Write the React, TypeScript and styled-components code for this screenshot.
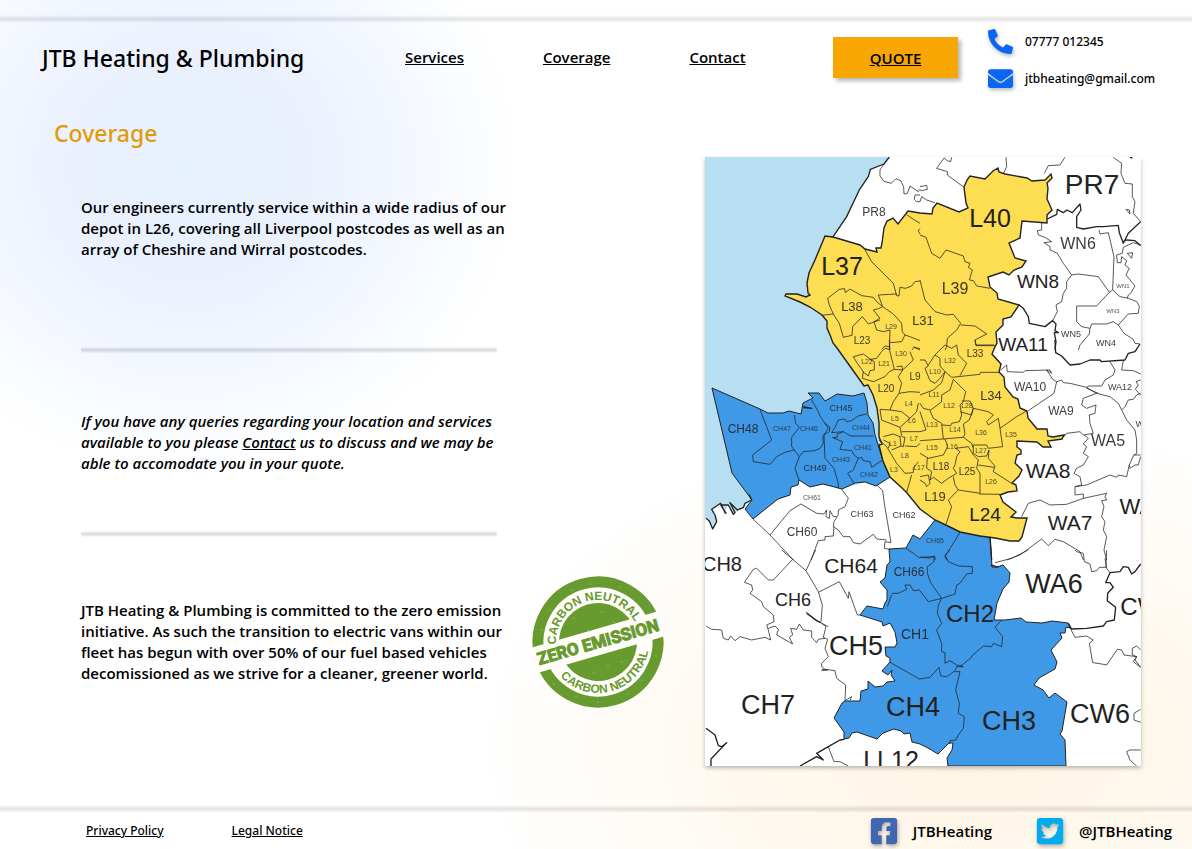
import React from "react";
import styled, { createGlobalStyle } from "styled-components";
import {
  FaEnvelope,
  FaFacebookSquare,
  FaPhoneAlt,
  FaTwitterSquare,
} from "react-icons/fa";

const MEDIUM = `"Noto Sans", "Open Sans", sans-serif`;

const GlobalStyle = createGlobalStyle`
  * { box-sizing: border-box; }
  body {
    margin: 0;
    font-family: "Open Sans", "Noto Sans", sans-serif;
    font-weight: 600;
    color: #000;
    background: #fff;
  }
  a { color: inherit; }
`;

const Page = styled.div`
  min-height: 100vh;
  display: flex;
  flex-direction: column;
  padding-top: 15px;
  background:
    radial-gradient(ellipse 330px 310px at 190px 165px, #e6f1fe 0%, #eaf1fd 35%, #f2f6ff 62%, #fafcff 85%, rgba(255, 255, 255, 0) 100%),
    radial-gradient(ellipse 500px 330px at 82% 88%, #fff4e4 0%, #fef8ed 40%, #fffcf8 75%, rgba(255, 255, 255, 0) 100%),
    #fff;
`;

const Rule = styled.div`
  flex: none;
  height: 8px;
  background: linear-gradient(rgba(0, 0, 0, 0), rgba(0, 0, 0, 0.11) 50%, rgba(0, 0, 0, 0));
`;

const Header = styled.header`
  display: grid;
  grid-template-columns: 363fr 428fr 155fr 204fr;
  align-items: center;
  padding-left: 42px;
  height: 74px;
`;

const Brand = styled.div`
  font-family: ${MEDIUM};
  font-size: 23px;
  line-height: 32px;
  font-weight: 500;
  white-space: nowrap;
  padding-bottom: 5px;
`;

const Nav = styled.nav`
  display: flex;
  gap: 79px;
  font-size: 15px;
  line-height: 20px;
  padding-bottom: 6px;
`;

const QuoteButton = styled.button`
  justify-self: start;
  width: 125px;
  height: 41px;
  margin-bottom: 5px;
  border: 0;
  background: #f7a604;
  box-shadow: 3px 3px 4px rgba(0, 0, 0, 0.28);
  font: inherit;
  font-size: 15px;
  text-decoration: underline;
  cursor: pointer;
`;

const ContactList = styled.address`
  display: grid;
  gap: 12px;
  font-style: normal;
  font-family: ${MEDIUM};
  font-size: 12px;
  font-weight: 500;
`;

const ContactLine = styled.a`
  display: flex;
  align-items: center;
  gap: 12px;
  height: 25px;
  text-decoration: none;
  svg {
    color: #0a66f5;
    filter: drop-shadow(1px 2px 2px rgba(0, 0, 0, 0.3));
  }
`;

const Main = styled.main`
  flex: 1;
  display: grid;
  grid-template-columns: minmax(0, 1fr) minmax(0, 436px);
  column-gap: 40px;
  padding: 20px 51px 38px 54px;
`;

const Heading = styled.h1`
  margin: 0;
  font-family: ${MEDIUM};
  font-size: 23px;
  line-height: 32px;
  font-weight: 500;
  color: #e29b08;
`;

const Story = styled.div`
  padding: 48px 0 0 27px;
`;

const Copy = styled.p<{ $italic?: boolean }>`
  margin: 0;
  max-width: 432px;
  font-size: 15px;
  line-height: 21px;
  font-style: ${(p) => (p.$italic ? "italic" : "normal")};
`;

const Divider = styled.div<{ $before: number; $after: number }>`
  max-width: 416px;
  height: 6px;
  border-radius: 3px;
  margin: ${(p) => p.$before}px 0 ${(p) => p.$after}px;
  background: linear-gradient(rgba(0, 0, 0, 0.02), rgba(0, 0, 0, 0.15) 50%, rgba(0, 0, 0, 0.02));
`;

const Pledge = styled.div`
  display: grid;
  grid-template-columns: minmax(0, 432px) 132px;
  gap: 19px;
  align-items: center;
`;

const MapFrame = styled.figure`
  margin: 40px 0 0;
  align-self: start;
  background: #fff;
  box-shadow: 0 2px 4px rgba(0, 0, 0, 0.28);
  svg { display: block; width: 100%; height: auto; }
`;

const Footer = styled.footer`
  display: flex;
  justify-content: space-between;
  align-items: center;
  height: 36px;
  padding: 0 20px 0 86px;
`;

const Legal = styled.nav`
  display: flex;
  gap: 68px;
  font-family: ${MEDIUM};
  font-size: 12px;
  line-height: 18px;
  font-weight: 500;
`;

const Socials = styled.div`
  display: flex;
  gap: 43px;
`;

const Social = styled.a<{ $tint: string }>`
  display: flex;
  align-items: center;
  gap: 14px;
  font-size: 15px;
  line-height: 20px;
  text-decoration: none;
  svg {
    color: ${(p) => p.$tint};
    filter: drop-shadow(1px 2px 2px rgba(0, 0, 0, 0.3));
  }
`;

/* ---- Postcode map ---- */

const LAND =
  "889,157 884,164 870,169 868,177 859,190 847,217 833,237 880,300 900,400 890,477 876,486 865,482 842,489 823,484 810,487 799,480 791,487 752,500 745,503 743,508 733,514 728,505 725,513 722,503 712,509 717,522 713,529 709,521 705,518 705,766 1141,766 1141,157";

const LIVERPOOL =
  "825,236 815,260 809,273 807,283 808,293 810,295 806,297 797,294 786,294 785,296 800,302 810,307 822,315 827,321 827,328 830,335 833,343 837,348 847,362 862,383 864,386 868,385 873,395 877,408 879,423 879,437 882,444 879,445 883,461 890,477 902,488 907,493 920,509 935,520 950,527 960,532 980,536 995,538 1010,541 1019,541 1022,537 1027,518 1017,518 1011,517 1016,512 1003,502 1000,495 1008,492 1017,491 1016,485 1012,483 1019,476 1022,470 1017,465 1015,463 1017,455 1021,454 1021,450 1017,447 1017,441 1037,442 1043,447 1051,447 1048,441 1062,439 1064,435 1053,437 1048,436 1047,429 1037,429 1028,418 1027,411 1020,408 1018,399 1013,397 1005,387 1004,377 999,372 1001,364 992,354 994,349 997,343 996,332 1003,325 1003,319 1011,317 1019,305 998,299 997,293 990,287 988,277 1003,272 1009,275 1014,270 1022,267 1026,261 1015,258 1009,243 1020,238 1022,221 1047,223 1047,215 1052,210 1047,199 1048,188 1047,183 1052,178 1051,174 1045,180 1032,181 1027,178 1005,174 999,172 998,168 993,171 985,179 970,176 967,180 964,187 966,203 968,208 959,212 937,203 933,208 932,214 920,213 908,211 898,224 893,218 887,221 884,228 882,243 881,248 876,248 877,252 865,249 860,245 833,237";

const WIRRAL =
  "712,388 760,409 768,413 783,413 789,411 801,414 803,403 813,398 808,393 819,393 825,401 832,397 837,394 853,396 864,393 867,403 868,415 873,423 875,435 883,461 890,477 876,486 865,482 855,483 842,489 823,484 810,487 799,480 798,485 791,487 790,495 778,499 753,519 745,509 752,500 732,473";

const CHESTER =
  "935,520 920,539 913,535 906,548 889,549 890,562 887,565 885,578 880,582 887,590 887,600 885,603 883,609 867,606 860,615 882,622 883,626 890,623 895,632 897,643 895,647 885,647 886,656 890,658 890,662 882,671 888,675 892,670 891,675 895,681 887,682 883,686 875,687 868,681 868,689 861,691 860,701 845,701 842,703 834,718 844,732 844,739 849,738 852,733 857,732 877,739 883,733 894,729 901,731 904,734 910,733 912,742 920,744 928,748 938,754 949,743 953,743 952,750 947,758 948,766 1066,766 1065,740 1060,734 1062,731 1067,702 1055,693 1049,698 1043,690 1034,685 1039,678 1055,669 1057,662 1051,650 1062,638 1060,633 1065,633 1066,627 1070,628 1068,623 1052,621 1042,623 1026,622 1021,618 1005,620 994,620 997,603 1003,589 1009,582 1010,573 1003,565 997,567 992,567 991,550 990,538";

type Sheet = { x: number; y: number; thin: string; bold: string };

/* District borders, drawn per map sheet at three units to the pixel. */
const SHEETS: Sheet[] = [
  {
    x: 700,
    y: 150,
    thin:
      "M552,42 540,60 540,78 552,94 574,100 588,86 602,92 611,110 612,132 622,130 630,108 655,125 660,118 M660,135 645,135 643,148 650,155 660,155 M620,194 640,208 660,220 M660,236 655,242 660,252 M495,300 515,335 580,400 590,437 597,438 600,412 617,415 635,408 645,395 660,393 M590,432 535,435 548,470 535,476 520,480 540,505 522,515 530,540 550,545 570,540 570,555 568,575 570,600 M365,496 400,492 388,465 383,445 418,418 434,416 436,428 450,417 485,437 520,442 530,455 548,470 M400,492 418,520 430,562 456,556 458,530 487,500 505,522 540,510 M548,470 580,492 605,520 607,545 615,555 605,575 572,578 M615,555 635,562 660,572 M545,598 555,588 568,590 M636,600 642,592 660,596",
    bold: "M568,21 552,42 511,58 505,80 478,120 440,200 398,262",
  },
  {
    x: 920,
    y: 150,
    thin:
      "M95,22 92,35 82,32 72,24 50,55 82,65 82,75 132,112 M0,110 20,106 22,118 5,122 0,120 M0,155 5,140 20,150 45,158 M258,22 260,50 250,72 M435,22 420,45 385,47 373,70 M580,22 605,40 603,70 615,100 637,102 637,140 645,155 640,190 662,215 M0,255 18,262 35,310 60,325 78,300 130,318 135,335 150,340 145,352 157,360 148,390 160,392 170,408 210,415 M0,390 15,450 45,485 80,495 100,493 122,520 110,540 82,565 80,590 75,600 M122,525 165,528 200,552 165,570 168,587 225,587 M365,218 365,240 352,242 355,255 375,262 395,275 372,278 390,290 390,300 412,310 430,340 455,375 440,395 440,415 430,430 425,455 408,465 412,485 398,512 M455,375 475,372 535,380 568,427 530,468 470,468 470,515 485,530 510,535 508,552 480,585 475,600 M537,240 540,252 565,248 582,320 578,420 600,440 625,445 650,455 658,468 655,490 625,492 595,525 580,515 560,522 515,522 510,535 M568,427 578,420 M595,525 612,550 640,568 645,580 660,582 M590,315 607,310 610,292 640,278 662,285 M590,315 592,338 603,338 605,320 620,332 615,345 628,355 618,375 645,408 632,430 625,435 622,445 M622,310 638,308 635,325Z M618,178 628,180 630,192Z",
    bold:
      "M382,207 410,193 412,178 430,188 440,180 457,188 480,162 483,180 470,200 470,232 490,237 530,230 550,230 595,226 598,248 610,280 625,250 662,215 M610,275 620,270 645,272 662,287 M297,465 310,475 325,500 328,520 375,530 398,512 408,522 405,542 415,548 403,548 408,575 405,600 M630,22 637,24",
  },
  {
    x: 700,
    y: 340,
    thin:
      "M180,208 215,300 158,345 160,365 210,373 230,350 255,337 283,330 M283,225 287,250 298,262 275,292 275,320 298,350 285,385 297,420 M298,350 310,335 345,332 360,325 370,310 368,290 385,265 360,228 355,215 335,180 M375,250 390,262 388,275 372,285 375,355 402,385 415,430 415,445 M395,278 405,262 415,240 435,237 440,245 455,242 475,228 500,222 M395,278 430,275 452,288 520,288 M430,275 412,282 412,292 398,293 428,305 420,328 455,332 462,345 475,355 485,352 490,362 510,365 515,382 545,362 M475,355 460,390 443,400 462,430 M460,50 490,42 512,58 530,55 545,35 555,25 568,28 570,0 M460,50 472,70 490,95 487,115 520,125 555,110 568,95 583,88 608,90 640,60 630,35 M508,58 523,65 523,90 510,92 505,108 488,95 M568,28 583,88 M590,80 606,78 608,90 595,110 605,130 597,160 580,185 570,210 540,208 545,240 600,262 630,235 605,215 570,210 M597,160 630,155 660,157 M630,235 650,215 655,190 M600,262 605,285 600,290 603,318 610,320 615,292 605,290 M605,275 660,275 M550,290 580,282 600,290 M565,325 570,310 550,300 M603,318 575,330 M537,300 560,320 590,370 615,400 640,398 640,385 655,365 M635,405 620,457 M640,20 660,30 M615,318 650,320 660,310 M160,538 210,585 280,660 M210,585 270,512 303,492 350,520 372,522 380,510 378,530 388,535 390,512 400,530 410,530 M425,447 445,475 435,500 415,510 415,525 402,545 400,560 415,570 430,590 450,590 460,608 480,612 520,583 530,597 560,600 M532,437 548,452 553,490 573,608 555,605 553,625 568,628 M402,560 400,588 375,590 375,600 355,602 333,660 M618,625 640,640 660,655",
    bold:
      "M18,535 28,543 38,567 50,545 45,525 35,508 62,490 75,518 78,520 62,495 85,495 100,523 105,518 90,488 112,510 130,503 135,490 155,480 148,465 155,480 M310,203 335,205 310,200",
  },
  {
    x: 920,
    y: 340,
    thin:
      "M0,60 15,60 25,78 15,85 30,122 45,130 60,115 75,95 60,78 60,55 45,45 75,15 95,25 110,15 115,45 140,70 120,107 M45,45 25,75 M75,95 95,112 180,103 182,97 237,97 M100,118 137,155 130,185 120,195 125,225 118,245 95,250 92,257 65,255 M100,118 90,150 65,165 65,185 30,212 40,235 65,250 70,297 M0,165 40,150 65,128 75,95 M0,190 10,205 30,210 M0,215 18,270 0,275 M0,302 70,297 130,292 155,310 158,322 M125,183 150,183 160,205 155,225 120,215 M160,205 205,215 220,225 200,245 205,255 235,235 M160,205 148,240 130,252 135,280 130,292 M235,235 240,265 248,320 205,325 200,315 160,315 M240,265 290,230 320,213 M0,340 25,355 70,345 83,320 75,297 M107,325 120,335 110,350 105,375 100,385 110,400 85,415 65,430 40,412 30,420 35,395 20,385 22,352 M107,325 145,320 160,345 175,360 170,385 180,400 180,460 115,450 105,435 100,410 M160,315 160,340 175,350 200,348 207,330 205,355 225,378 220,395 275,430 M175,375 222,382 M178,462 240,463 M115,450 85,480 95,500 78,553 M0,420 15,430 20,440 30,430 25,405 0,410 M165,0 168,15 222,15 M242,90 260,75 262,95 310,97 315,92 390,90 395,100 380,90 398,118 410,125 402,160 325,212 M410,125 425,120 430,128 450,130 500,142 520,155 530,160 490,175 485,195 500,205 528,195 525,220 508,225 510,250 520,280 490,285 480,275 440,280 432,290 M570,65 585,90 580,105 555,120 545,138 505,138 500,145 535,160 M610,62 605,90 640,92 662,102 M530,160 570,170 595,190 605,210 620,240 645,270 650,300 650,340 640,348 628,375 630,385 645,375 655,375 662,350 M640,345 662,345 M628,375 620,410 595,405 590,412 570,405 500,435 465,440 465,465 490,462 490,475 M465,440 485,435 480,410 462,400 470,385 490,375 505,350 490,340 500,320 490,312 505,295 492,285 M605,210 615,200 625,180 640,178 650,165 662,160 M662,120 648,125 655,135 646,148 662,165 M305,530 325,490 360,480 390,495 440,493 490,475 560,460 555,470 560,480 545,482 552,500 545,530 555,545 550,570 560,590 552,630 560,660 M260,660 300,645 365,597 385,617 405,598 430,605 480,635 490,660 M120,577 75,650 80,660 M0,652 45,650 45,660",
    bold:
      "M405,0 407,38 425,48 450,75 480,72 510,60 540,60 545,65 615,60 625,40 645,35 660,12 M210,590 215,660",
  },
  {
    x: 700,
    y: 550,
    thin:
      "M245,0 318,62 347,0 M278,28 220,90 205,90 170,55 160,58 133,97 155,105 158,120 150,130 185,155 190,170 220,195 222,215 200,225 205,240 212,270 195,262 155,270 120,260 105,272 92,258 85,270 70,265 65,240 35,238 18,228 M318,62 355,125 367,165 363,215 M355,127 418,95 445,145 447,125 472,195 480,195 M365,220 378,230 370,262 383,268 375,295 385,320 365,340 365,350 375,358 405,362 410,385 437,405 435,452 M205,235 225,228 235,238 230,255 278,282 268,262 278,255 272,235 290,238 298,222 310,240 335,243 335,262 350,278 355,268 375,265 M365,358 383,360 365,362 M570,337 660,388 M575,130 595,130 620,118 615,105 630,105 640,122 660,120 M562,170 575,135 M385,590 402,635 420,635 445,648 M435,452 455,440 450,452 M318,186 350,212 385,230",
    bold:
      "M18,535 45,555 55,587 65,590 80,578 33,627 33,648 M300,648 350,620 370,630 350,610 385,590 420,570 433,568 M320,190 350,212 362,218",
  },
  {
    x: 920,
    y: 550,
    thin:
      "M0,22 30,24 42,18 42,35 22,50 22,70 32,98 65,145 25,155 0,122 M65,145 55,165 52,190 65,220 50,240 65,280 65,305 75,308 75,340 90,332 110,345 130,350 110,350 M65,145 105,132 110,105 120,100 140,72 157,70 157,50 115,48 85,35 75,15 90,0 M120,350 155,322 155,318 190,288 215,290 220,280 245,290 248,260 225,232 245,210 M110,350 105,362 80,380 62,378 57,352 30,382 0,387 M105,365 120,365 107,420 118,460 115,490 133,500 130,535 115,555 108,570 90,572 88,582 M225,38 275,25 325,0 M465,0 470,5 490,10 493,35 510,42 515,65 530,62 538,52 558,52 560,0 M555,25 560,55 570,68 M450,233 465,262 500,258 520,270 508,280 518,338 545,342 560,345 592,298 605,300 612,315 650,320 645,330 662,352 M662,300 650,288 637,295 637,315 650,320 640,335 662,352 M662,478 642,490 642,510 662,517 M662,600 630,600 620,605 630,630 650,648",
    bold:
      "M445,220 455,237 500,235 550,228 560,215 583,210 587,172 562,152 563,130 580,112 570,98 557,98 570,68 600,65 610,50 625,52 635,72 645,65 662,42 M213,45 235,52",
  },
];

type Label = [text: string, x: number, y: number, size: number];

const LABELS: Label[] = [
  ["PR7", 1092, 184, 28], ["PR8", 874, 212, 12], ["L40", 990, 218, 25], ["L37", 842, 266, 25],
  ["L39", 955, 289, 16], ["L38", 852, 307, 13], ["L31", 923, 321, 13], ["L29", 891, 327, 7],
  ["L23", 862, 341, 10], ["WN6", 1078, 244, 16], ["WN8", 1038, 282, 19], ["WN1", 1123, 286, 6],
  ["WN3", 1113, 311, 6], ["WN5", 1071, 334, 9], ["WN4", 1106, 343, 9], ["WA11", 1023, 345, 19],
  ["WA10", 1030, 387, 12], ["WA9", 1061, 411, 12], ["WA12", 1120, 387, 9], ["WA5", 1108, 441, 16],
  ["WA8", 1048, 471, 21], ["WA7", 1070, 523, 21], ["WA6", 1054, 584, 27], ["L33", 975, 354, 10],
  ["L32", 950, 361, 7], ["L34", 991, 396, 13], ["L30", 901, 354, 7], ["L22", 867, 362, 7],
  ["L21", 884, 364, 7], ["L9", 915, 377, 10], ["L10", 935, 372, 7], ["L20", 886, 389, 10],
  ["L11", 934, 395, 7], ["L4", 909, 404, 7], ["L12", 949, 406, 7], ["L28", 967, 406, 7],
  ["L5", 895, 419, 7], ["L6", 912, 421, 7], ["L13", 932, 425, 7], ["L14", 955, 430, 7],
  ["L36", 981, 433, 7], ["L35", 1011, 435, 7], ["L7", 914, 439, 7], ["L1", 893, 444, 7],
  ["L15", 932, 448, 7], ["L16", 952, 447, 7], ["L27", 981, 451, 7], ["L8", 905, 456, 7],
  ["L3", 894, 470, 7], ["L17", 919, 468, 7], ["L18", 941, 467, 10], ["L25", 967, 472, 10],
  ["L26", 991, 482, 7], ["L19", 935, 497, 13], ["L24", 985, 515, 19], ["CH48", 743, 429, 12],
  ["CH47", 782, 429, 7], ["CH46", 809, 429, 7], ["CH45", 841, 408, 9], ["CH44", 861, 428, 7],
  ["CH41", 863, 448, 7], ["CH43", 841, 460, 7], ["CH49", 815, 468, 9], ["CH42", 869, 475, 7],
  ["CH61", 812, 498, 7], ["CH63", 862, 514, 9], ["CH62", 904, 515, 9], ["CH60", 802, 532, 12],
  ["CH65", 935, 541, 7], ["CH66", 909, 572, 12], ["CH64", 851, 566, 21], ["CH8", 722, 564, 20],
  ["CH6", 793, 600, 18], ["CH5", 856, 646, 27], ["CH7", 768, 705, 27], ["CH1", 915, 634, 14],
  ["CH2", 970, 614, 24], ["CH4", 913, 707, 27], ["CH3", 1009, 721, 27], ["CW6", 1100, 714, 27],
  ["LL12", 891, 760, 25], ["CW7", 1147, 607, 24], ["WA4", 1143, 507, 22], ["WA3", 1145, 424, 9],
];

function labelOpacity(size: number) {
  if (size < 9) return 0.8;
  return size < 17 ? 0.88 : 1;
}

function PostcodeMap() {
  return (
    <svg viewBox="705 157 436 609" role="img" aria-label="Map of covered postcodes">
      <rect x="705" y="157" width="436" height="609" fill="#b8dff1" />
      <polygon points={LAND} fill="#fff" />
      <polygon points={CHESTER} fill="#3f99e6" stroke="#222" strokeWidth="1" />
      <polygon points={WIRRAL} fill="#3f99e6" stroke="#222" strokeWidth="1" />
      <polygon points={LIVERPOOL} fill="#fddd51" stroke="#222" strokeWidth="1.4" />
      {SHEETS.map((s) => (
        <g
          key={`${s.x}-${s.y}`}
          transform={`translate(${s.x} ${s.y}) scale(0.3333)`}
          fill="none"
          stroke="#222"
          strokeLinejoin="round"
        >
          <path d={s.thin} strokeWidth="2.6" opacity="0.88" />
          <path d={s.bold} strokeWidth="4" />
        </g>
      ))}
      <g fill="#222" textAnchor="middle" fontFamily='"Liberation Sans", Arial, sans-serif' fontWeight="400">
        {LABELS.map(([text, x, y, size]) => (
          <text key={text} x={x} y={y + size * 0.34} fontSize={size} opacity={labelOpacity(size)}>
            {text}
          </text>
        ))}
      </g>
    </svg>
  );
}

const SPECKS: [number, number][] = [
  [-26, -52], [-8, -58], [22, -55], [-48, -32], [-56, -12], [-24, -24], [4, -30], [16, -20],
  [-10, -12], [44, 38], [58, 14], [10, 24], [24, 20], [-4, 30], [30, 52], [-22, 54], [-44, 42], [0, 60],
];

function ZeroEmissionStamp() {
  return (
    <svg width="132" height="132" viewBox="-66 -66 132 132" role="img" aria-label="Zero emission, carbon neutral">
      <defs>
        <path id="stamp-top" d="M-42,0 A42,42 0 0 1 42,0" />
        <path id="stamp-bottom" d="M-51,0 A51,51 0 0 0 51,0" />
      </defs>
      <g transform="rotate(-16)">
        <circle r="60" fill="#fffdf9" stroke="#679a2f" strokeWidth="11" />
        <circle r="39" fill="#679a2f" />
        <rect x="-66" y="-13" width="132" height="26" fill="#fffdf9" />
        <g
          fill="#679a2f"
          textAnchor="middle"
          fontFamily='"Liberation Sans", Arial, sans-serif'
          fontWeight="700"
        >
          <text
            y="6"
            fontSize="17"
            fontFamily="Roboto, sans-serif"
            stroke="#679a2f"
            strokeWidth="1"
          >
            ZERO EMISSION
          </text>
          <text fontSize="12">
            <textPath href="#stamp-top" startOffset="50%">CARBON NEUTRAL</textPath>
          </text>
          <text fontSize="12">
            <textPath href="#stamp-bottom" startOffset="50%">CARBON NEUTRAL</textPath>
          </text>
        </g>
      </g>
      {SPECKS.map(([x, y]) => (
        <circle key={`${x},${y}`} cx={x} cy={y} r="0.6" fill="#c4d9a8" />
      ))}
    </svg>
  );
}

export default function App() {
  return (
    <>
      <GlobalStyle />
      <Page>
        <Rule />
        <Header>
          <Brand>JTB Heating &amp; Plumbing</Brand>
          <Nav>
            <a href="#services">Services</a>
            <a href="#coverage">Coverage</a>
            <a href="#contact">Contact</a>
          </Nav>
          <QuoteButton type="button">QUOTE</QuoteButton>
          <ContactList>
            <ContactLine href="tel:07777012345">
              <FaPhoneAlt size={25} />
              07777 012345
            </ContactLine>
            <ContactLine href="mailto:jtbheating@gmail.com">
              <FaEnvelope size={25} />
              jtbheating@gmail.com
            </ContactLine>
          </ContactList>
        </Header>
        <Main>
          <section>
            <Heading>Coverage</Heading>
            <Story>
              <Copy>
                Our engineers currently service within a wide radius of our depot in L26,
                covering all Liverpool postcodes as well as an array of Cheshire and Wirral
                postcodes.
              </Copy>
              <Divider $before={87} $after={58} />
              <Copy $italic>
                If you have any queries regarding your location and services available to you
                please <a href="#contact">Contact</a> us to discuss and we may be able to
                accomodate you in your quote.
              </Copy>
              <Divider $before={57} $after={39} />
              <Pledge>
                <Copy>
                  JTB Heating &amp; Plumbing is committed to the zero emission initiative. As
                  such the transition to electric vans within our fleet has begun with over 50%
                  of our fuel based vehicles decomissioned as we strive for a cleaner, greener
                  world.
                </Copy>
                <ZeroEmissionStamp />
              </Pledge>
            </Story>
          </section>
          <MapFrame>
            <PostcodeMap />
          </MapFrame>
        </Main>
        <Rule />
        <Footer>
          <Legal>
            <a href="#privacy">Privacy Policy</a>
            <a href="#legal">Legal Notice</a>
          </Legal>
          <Socials>
            <Social href="#facebook" $tint="#4267b2">
              <FaFacebookSquare size={30} />
              JTBHeating
            </Social>
            <Social href="#twitter" $tint="#00aced">
              <FaTwitterSquare size={30} />
              @JTBHeating
            </Social>
          </Socials>
        </Footer>
      </Page>
    </>
  );
}
